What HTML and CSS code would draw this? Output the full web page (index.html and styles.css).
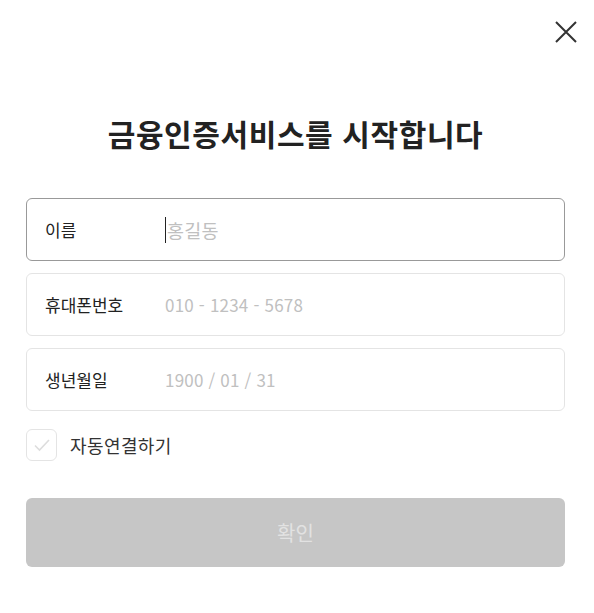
FILE: index.html
```html
<!DOCTYPE html>
<html lang="ko">
<head>
    <meta charset="UTF-8">
    <meta name="viewport" content="width=device-width, initial-scale=1.0">
    <title>금융인증서비스</title>
    <link rel="stylesheet" href="styles.css">
</head>
<body>
    <div class="modal">
        <div class="top-bar">
            <button class="close-btn" aria-label="닫기">
                <svg width="22" height="22" viewBox="0 0 22 22">
                    <path d="M1 1 L21 21 M21 1 L1 21" stroke="#333" stroke-width="2" fill="none"/>
                </svg>
            </button>
        </div>

        <h1 class="title">금융인증서비스를 시작합니다</h1>

        <div class="form">
            <div class="field active">
                <span class="label">이름</span>
                <span class="value name"><span class="caret"></span>홍길동</span>
            </div>
            <div class="field">
                <span class="label">휴대폰번호</span>
                <span class="value">010 - 1234 - 5678</span>
            </div>
            <div class="field">
                <span class="label">생년월일</span>
                <span class="value">1900 / 01 / 31</span>
            </div>

            <label class="auto-connect">
                <span class="check">
                    <svg width="18" height="14" viewBox="0 0 18 14">
                        <path d="M2 7.5 L6.5 12 L16 2" stroke="#ddd" stroke-width="1.6" fill="none"/>
                    </svg>
                </span>
                <span class="check-text">자동연결하기</span>
            </label>

            <button class="submit" disabled>확인</button>
        </div>
    </div>
</body>
</html>
```

FILE: styles.css
```css
body {
    margin: 0;
    background: #fff;
    font-family: "Noto Sans CJK KR", "Noto Sans", sans-serif;
    color: #222;
}
.modal {
    width: 539px;
    padding: 0 29px 0 26px;
}
.top-bar {
    display: flex;
    justify-content: flex-end;
    padding-top: 21px;
}
.close-btn {
    background: none;
    border: none;
    padding: 0;
    margin-right: -12px;
    width: 22px;
    height: 22px;
    cursor: pointer;
}
.title {
    margin: 70px 0 0;
    text-align: center;
    font-size: 30px;
    font-weight: 700;
    line-height: 40px;
    color: #222;
    letter-spacing: 0.6px;
}
.form {
    margin-top: 45px;
    display: flex;
    flex-direction: column;
    gap: 12px;
}
.field {
    display: flex;
    align-items: center;
    height: 61px;
    border: 1px solid #e4e4e4;
    border-radius: 6px;
    padding: 0 18px;
}
.field.active {
    border-color: #999;
}
.label {
    width: 120px;
    font-size: 17px;
    color: #222;
}
.value {
    display: flex;
    align-items: center;
    font-size: 17px;
    color: #c0c0c0;
    letter-spacing: 0.2px;
}
.value.name {
    font-size: 18.5px;
}
.caret {
    display: inline-block;
    width: 1px;
    height: 26px;
    background: #222;
    margin-right: 1px;
}
.auto-connect {
    display: flex;
    align-items: center;
    gap: 13px;
    margin-top: 6px;
    cursor: pointer;
}
.check {
    width: 29px;
    height: 30px;
    border: 1px solid #e4e4e4;
    border-radius: 6px;
    display: flex;
    align-items: center;
    justify-content: center;
}
.check-text {
    font-size: 18px;
    color: #333;
    letter-spacing: 0.4px;
}
.submit {
    margin-top: 25px;
    height: 69px;
    border: none;
    border-radius: 6px;
    background: #c6c6c6;
    color: #e2e2e2;
    font-family: inherit;
    font-size: 20px;
}
```
